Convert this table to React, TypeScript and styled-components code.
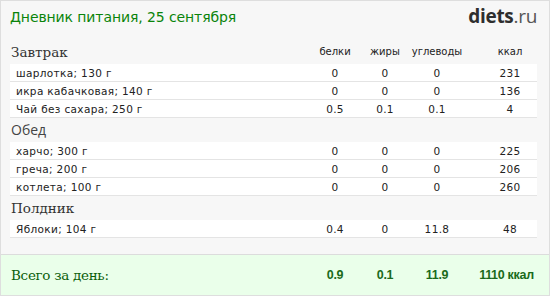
import React from "react";
import styled, { createGlobalStyle } from "styled-components";

const Global = createGlobalStyle`
  html, body { margin: 0; padding: 0; background: #fff; }
  body { width: 550px; height: 296px; overflow: hidden; }
`;

const Card = styled.div`
  box-sizing: border-box;
  width: 550px;
  height: 296px;
  border: 1px solid #dedede;
  background: #f7f7f7;
  display: flex;
  flex-direction: column;
`;

const Header = styled.div`
  height: 39px;
  display: flex;
  justify-content: space-between;
  align-items: flex-start;
  padding: 0 12px 0 9px;
`;

const Title = styled.div`
  font-family: "DejaVu Sans", Verdana, sans-serif;
  font-size: 14px;
  color: #0a840a;
  margin-top: 8px;
  letter-spacing: -0.1px;
`;

const Logo = styled.div`
  font-family: "Open Sans", sans-serif;
  font-size: 19px;
  color: #333;
  margin-top: 2px;
  letter-spacing: -0.3px;
  b { font-weight: 700; color: #2e2e2e; }
  span { font-weight: 400; color: #555; }
`;

const Body = styled.div`
  padding: 0 12px 0 9px;
  flex: 1;
`;

const Grid = styled.div`
  display: grid;
  grid-template-columns: 1fr 50px 50px 54px 73px;
`;

const SectionHead = styled(Grid)`
  height: 24px;
  align-items: end;
`;

const SectionName = styled.div<{ $font: string; $size: number; $color: string }>`
  font-family: ${(p) => p.$font};
  font-size: ${(p) => p.$size}px;
  color: ${(p) => p.$color};
  padding-left: 1px;
  line-height: 20px;
  padding-bottom: 2px;
`;

const ColLabel = styled.div<{ $pad?: boolean }>`
  font-family: "DejaVu Sans", Verdana, sans-serif;
  font-size: 10px;
  color: #222;
  text-align: center;
  padding-left: ${(p) => (p.$pad ? 19 : 0)}px;
  line-height: 14px;
  padding-bottom: 5px;
`;

const Row = styled(Grid)`
  height: 17px;
  background: #fff;
  border-bottom: 1px solid #e4e4e4;
  align-items: center;
  font-family: "DejaVu Sans", Verdana, sans-serif;
  font-size: 10.5px;
  letter-spacing: 0.35px;
  color: #222;
`;

const Name = styled.div`
  padding-left: 6px;
`;

const Num = styled.div<{ $pad?: boolean }>`
  text-align: center;
  padding-left: ${(p) => (p.$pad ? 19 : 0)}px;
`;

const Footer = styled.div`
  height: 40px;
  border-top: 1px solid #dcdcdc;
  background: #eaffea;
  padding: 0 12px 0 9px;
  display: flex;
  flex-direction: column;
  justify-content: center;
`;

const TotalGrid = styled(Grid)`
  align-items: center;
`;

const TotalLabel = styled.div`
  font-family: "DejaVu Serif", Georgia, serif;
  font-size: 13.5px;
  color: #0b5e0b;
  padding-left: 1px;
  letter-spacing: -0.3px;
`;

const TotalNum = styled.div<{ $pad?: boolean }>`
  font-family: "Liberation Sans", Arial, sans-serif;
  font-weight: 700;
  font-size: 12.5px;
  color: #1a6a1a;
  text-align: center;
  padding-left: ${(p) => (p.$pad ? 12 : 0)}px;
  letter-spacing: -0.3px;
  white-space: nowrap;
`;

type Item = [string, string, string, string, string];
type Section = { name: string; font: string; size: number; color: string; items: Item[] };

const sections: Section[] = [
  {
    name: "Завтрак",
    font: '"DejaVu Serif", serif',
    size: 13.5,
    color: "#333",
    items: [
      ["шарлотка; 130 г", "0", "0", "0", "231"],
      ["икра кабачковая; 140 г", "0", "0", "0", "136"],
      ["Чай без сахара; 250 г", "0.5", "0.1", "0.1", "4"],
    ],
  },
  {
    name: "Обед",
    font: '"Open Sans", sans-serif',
    size: 14,
    color: "#444",
    items: [
      ["харчо; 300 г", "0", "0", "0", "225"],
      ["греча; 200 г", "0", "0", "0", "206"],
      ["котлета; 100 г", "0", "0", "0", "260"],
    ],
  },
  {
    name: "Полдник",
    font: '"DejaVu Serif", serif',
    size: 13.5,
    color: "#333",
    items: [["Яблоки; 104 г", "0.4", "0", "11.8", "48"]],
  },
];

export default function App() {
  return (
    <>
      <Global />
      <Card>
        <Header>
          <Title>Дневник питания, 25 сентября</Title>
          <Logo>
            <b>diets</b>
            <span>.ru</span>
          </Logo>
        </Header>
        <Body>
          {sections.map((s, i) => (
            <div key={s.name}>
              <SectionHead>
                <SectionName $font={s.font} $size={s.size} $color={s.color}>
                  {s.name}
                </SectionName>
                {i === 0 && (
                  <>
                    <ColLabel>белки</ColLabel>
                    <ColLabel>жиры</ColLabel>
                    <ColLabel>углеводы</ColLabel>
                    <ColLabel $pad>ккал</ColLabel>
                  </>
                )}
              </SectionHead>
              {s.items.map((it) => (
                <Row key={it[0]}>
                  <Name>{it[0]}</Name>
                  <Num>{it[1]}</Num>
                  <Num>{it[2]}</Num>
                  <Num>{it[3]}</Num>
                  <Num $pad>{it[4]}</Num>
                </Row>
              ))}
            </div>
          ))}
        </Body>
        <Footer>
          <TotalGrid>
            <TotalLabel>Всего за день:</TotalLabel>
            <TotalNum>0.9</TotalNum>
            <TotalNum>0.1</TotalNum>
            <TotalNum>11.9</TotalNum>
            <TotalNum $pad>1110 ккал</TotalNum>
          </TotalGrid>
        </Footer>
      </Card>
    </>
  );
}
